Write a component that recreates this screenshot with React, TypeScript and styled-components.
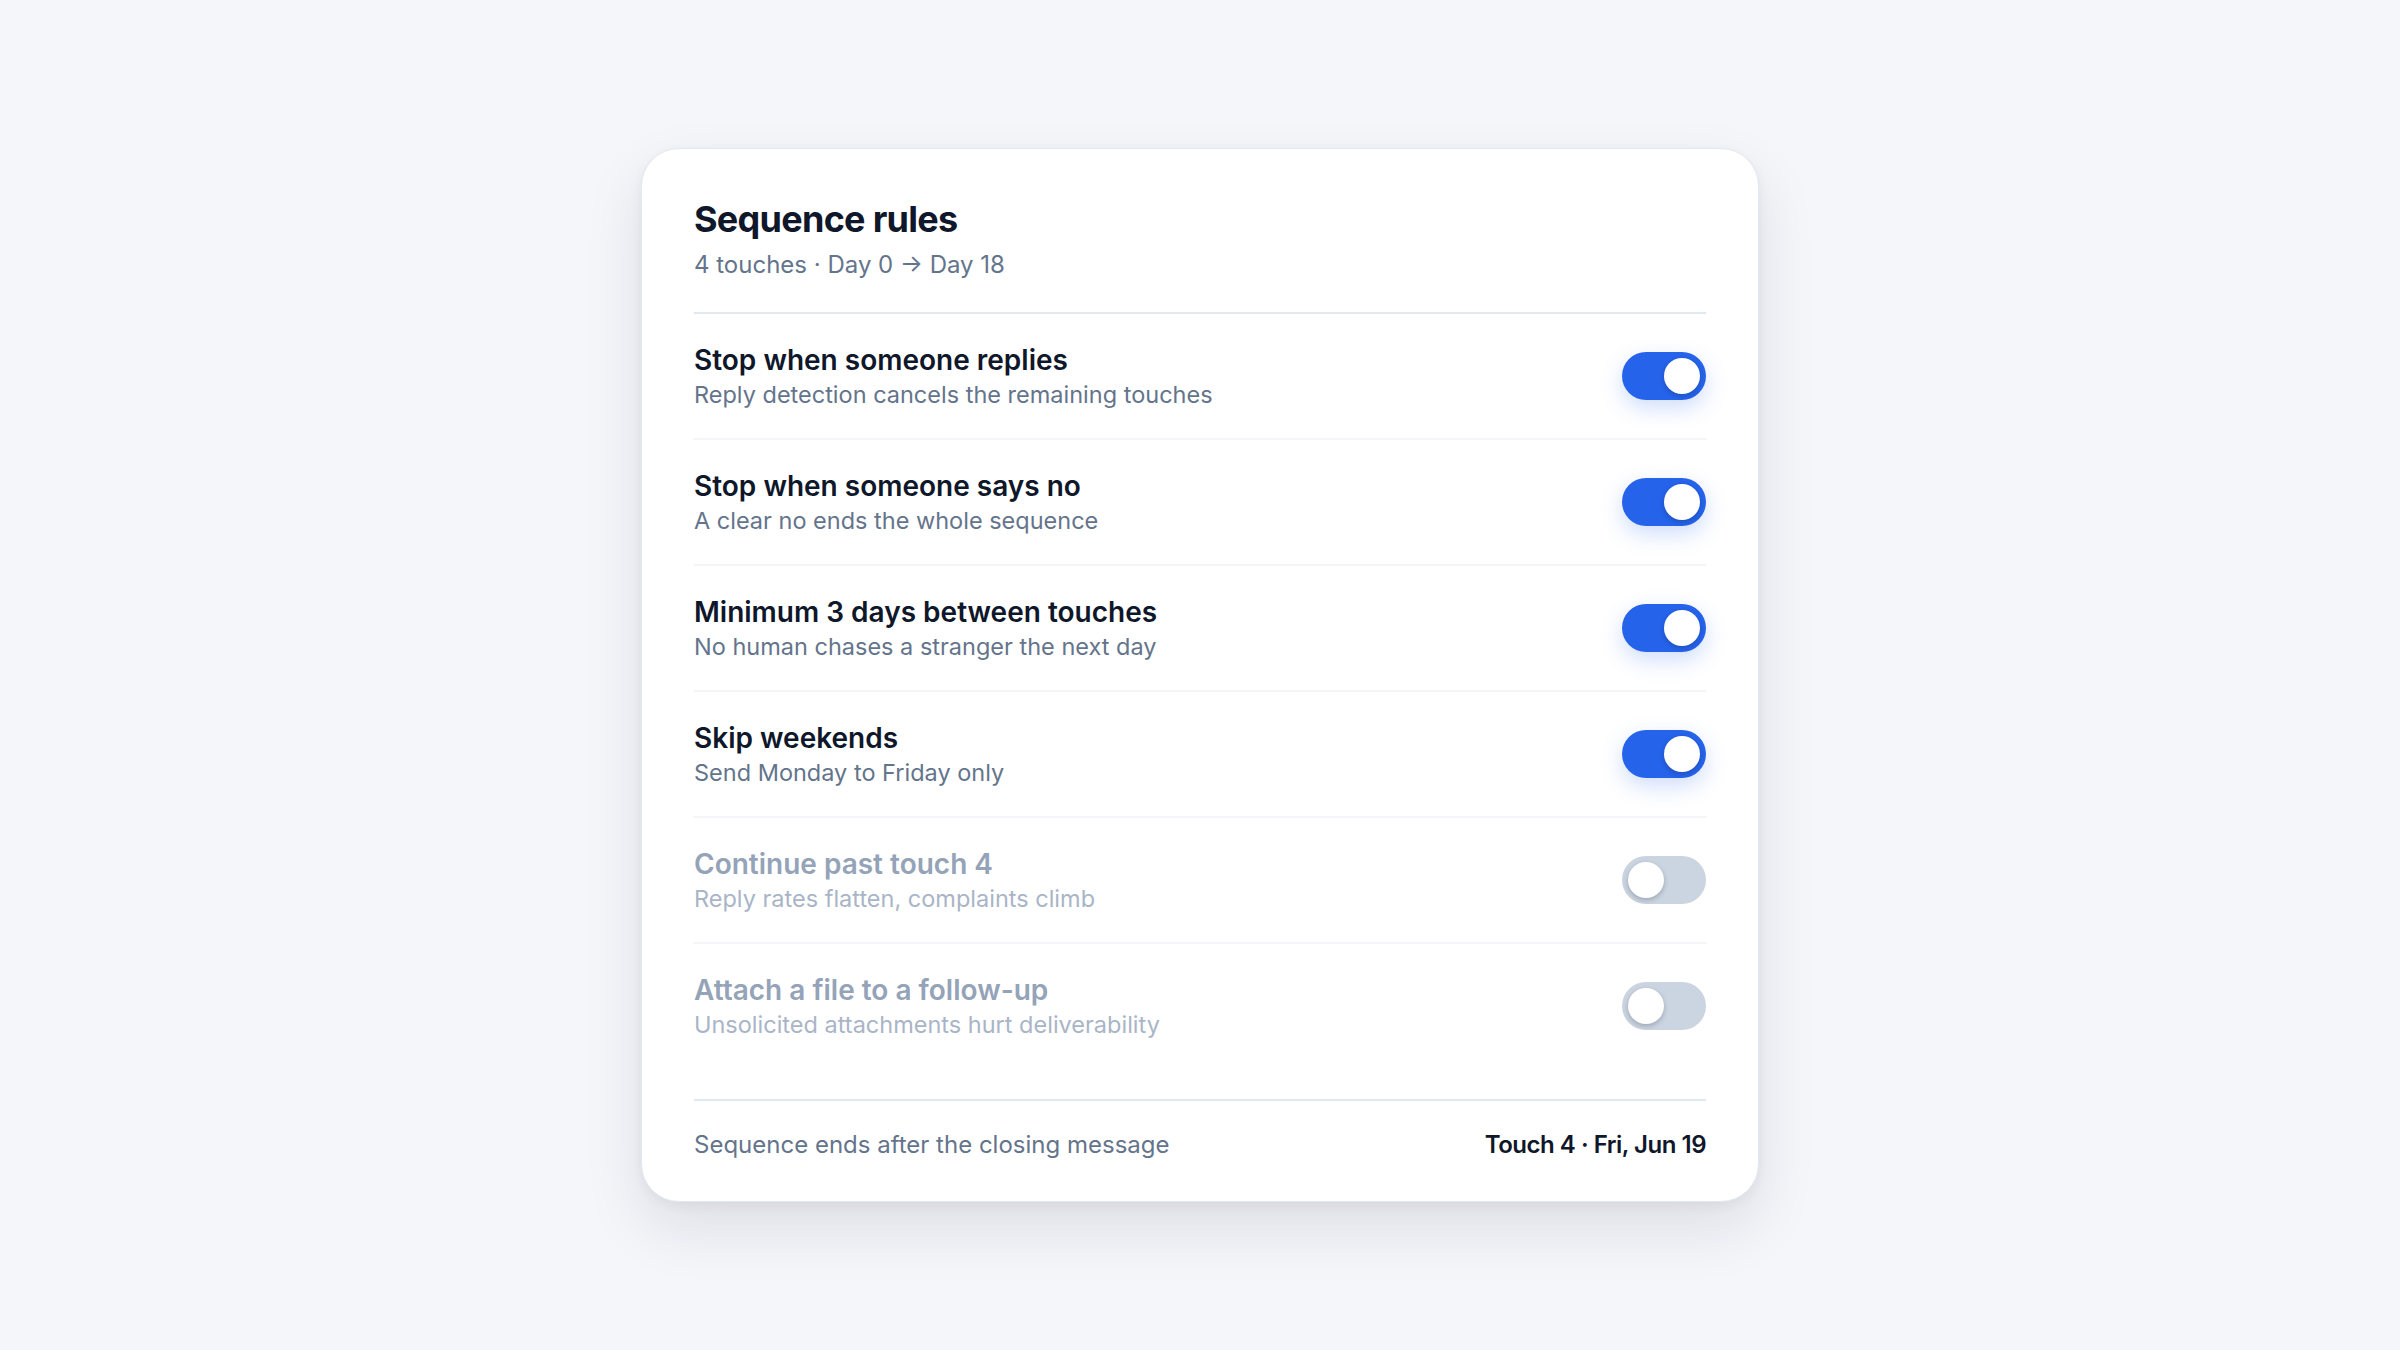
import React, { useState } from "react";
import styled, { createGlobalStyle } from "styled-components";

const GlobalStyle = createGlobalStyle`
  * { box-sizing: border-box; }
  html, body {
    margin: 0;
    padding: 0;
    background: #f4f6fa;
    font-family: Inter, "Noto Sans", sans-serif;
    -webkit-font-smoothing: antialiased;
  }
`;

type Rule = {
  id: string;
  title: string;
  hint: string;
  on: boolean;
};

const initialRules: Rule[] = [
  { id: "reply", title: "Stop when someone replies", hint: "Reply detection cancels the remaining touches", on: true },
  { id: "no", title: "Stop when someone says no", hint: "A clear no ends the whole sequence", on: true },
  { id: "gap", title: "Minimum 3 days between touches", hint: "No human chases a stranger the next day", on: true },
  { id: "weekends", title: "Skip weekends", hint: "Send Monday to Friday only", on: true },
  { id: "past4", title: "Continue past touch 4", hint: "Reply rates flatten, complaints climb", on: false },
  { id: "attach", title: "Attach a file to a follow-up", hint: "Unsolicited attachments hurt deliverability", on: false },
];

export default function App() {
  const [rules, setRules] = useState(initialRules);

  const toggle = (id: string) =>
    setRules((list) => list.map((r) => (r.id === id ? { ...r, on: !r.on } : r)));

  return (
    <Page>
      <GlobalStyle />
      <Card>
        <Header>
          <Title>Sequence rules</Title>
          <Meta>4 touches · Day 0 → Day 18</Meta>
        </Header>

        <RuleList>
          {rules.map((rule) => (
            <RuleRow key={rule.id}>
              <RuleText>
                <RuleTitle $muted={!rule.on}>{rule.title}</RuleTitle>
                <RuleHint $muted={!rule.on}>{rule.hint}</RuleHint>
              </RuleText>
              <Switch
                type="button"
                role="switch"
                aria-checked={rule.on}
                $on={rule.on}
                onClick={() => toggle(rule.id)}
              >
                <Knob $on={rule.on} />
              </Switch>
            </RuleRow>
          ))}
        </RuleList>

        <Footer>
          <FooterNote>Sequence ends after the closing message</FooterNote>
          <FooterEnd>Touch 4 · Fri, Jun 19</FooterEnd>
        </Footer>
      </Card>
    </Page>
  );
}

const Page = styled.main`
  min-height: 100vh;
  display: flex;
  align-items: center;
  justify-content: center;
`;

const Card = styled.section`
  width: 1118px;
  background: #ffffff;
  border: 1px solid #e2e8f0;
  border-radius: 38px;
  padding: 48px 52px 40px;
  box-shadow: 0 26px 60px rgba(15, 23, 42, 0.1), 0 4px 12px rgba(15, 23, 42, 0.05);
`;

const Header = styled.header`
  padding-bottom: 31px;
  border-bottom: 2px solid #e2e8f0;
`;

const Title = styled.h1`
  margin: 0;
  font-size: 36px;
  line-height: 44px;
  font-weight: 700;
  letter-spacing: -0.02em;
  color: #0f172a;
`;

const Meta = styled.div`
  margin-top: 8px;
  font-size: 24px;
  line-height: 32px;
  color: #64748b;
`;

const RuleList = styled.ul`
  list-style: none;
  margin: 0 0 31px;
  padding: 0;
`;

const RuleRow = styled.li`
  height: 126px;
  display: flex;
  align-items: center;
  justify-content: space-between;
  border-bottom: 2px solid #f3f5f8;

  &:last-child {
    height: 124px;
    border-bottom: none;
  }
`;

const RuleText = styled.div`
  display: flex;
  flex-direction: column;
  gap: 2px;
`;

const RuleTitle = styled.div<{ $muted: boolean }>`
  font-size: 28px;
  line-height: 36px;
  font-weight: 600;
  color: ${(p) => (p.$muted ? "#94a3b8" : "#0f172a")};
`;

const RuleHint = styled.div<{ $muted: boolean }>`
  font-size: 23.5px;
  line-height: 30px;
  color: ${(p) => (p.$muted ? "#a9b5c7" : "#64748b")};
`;

const Switch = styled.button<{ $on: boolean }>`
  position: relative;
  flex-shrink: 0;
  width: 84px;
  height: 48px;
  border: none;
  padding: 0;
  border-radius: 999px;
  cursor: pointer;
  background: ${(p) => (p.$on ? "#2563eb" : "#cbd5e1")};
  box-shadow: ${(p) => (p.$on ? "0 8px 22px rgba(37, 99, 235, 0.22)" : "none")};
  transition: background 0.2s ease;
`;

const Knob = styled.span<{ $on: boolean }>`
  position: absolute;
  top: 6px;
  left: ${(p) => (p.$on ? "42px" : "6px")};
  width: 36px;
  height: 36px;
  border-radius: 50%;
  background: #ffffff;
  box-shadow: 0 2px 5px rgba(15, 23, 42, 0.25);
  transition: left 0.2s ease;
`;

const Footer = styled.footer`
  display: flex;
  align-items: center;
  justify-content: space-between;
  padding-top: 28px;
  border-top: 2px solid #e2e8f0;
`;

const FooterNote = styled.span`
  font-size: 24px;
  line-height: 32px;
  color: #64748b;
`;

const FooterEnd = styled.span`
  font-size: 24px;
  line-height: 32px;
  font-weight: 600;
  letter-spacing: -0.02em;
  color: #0f172a;
`;
